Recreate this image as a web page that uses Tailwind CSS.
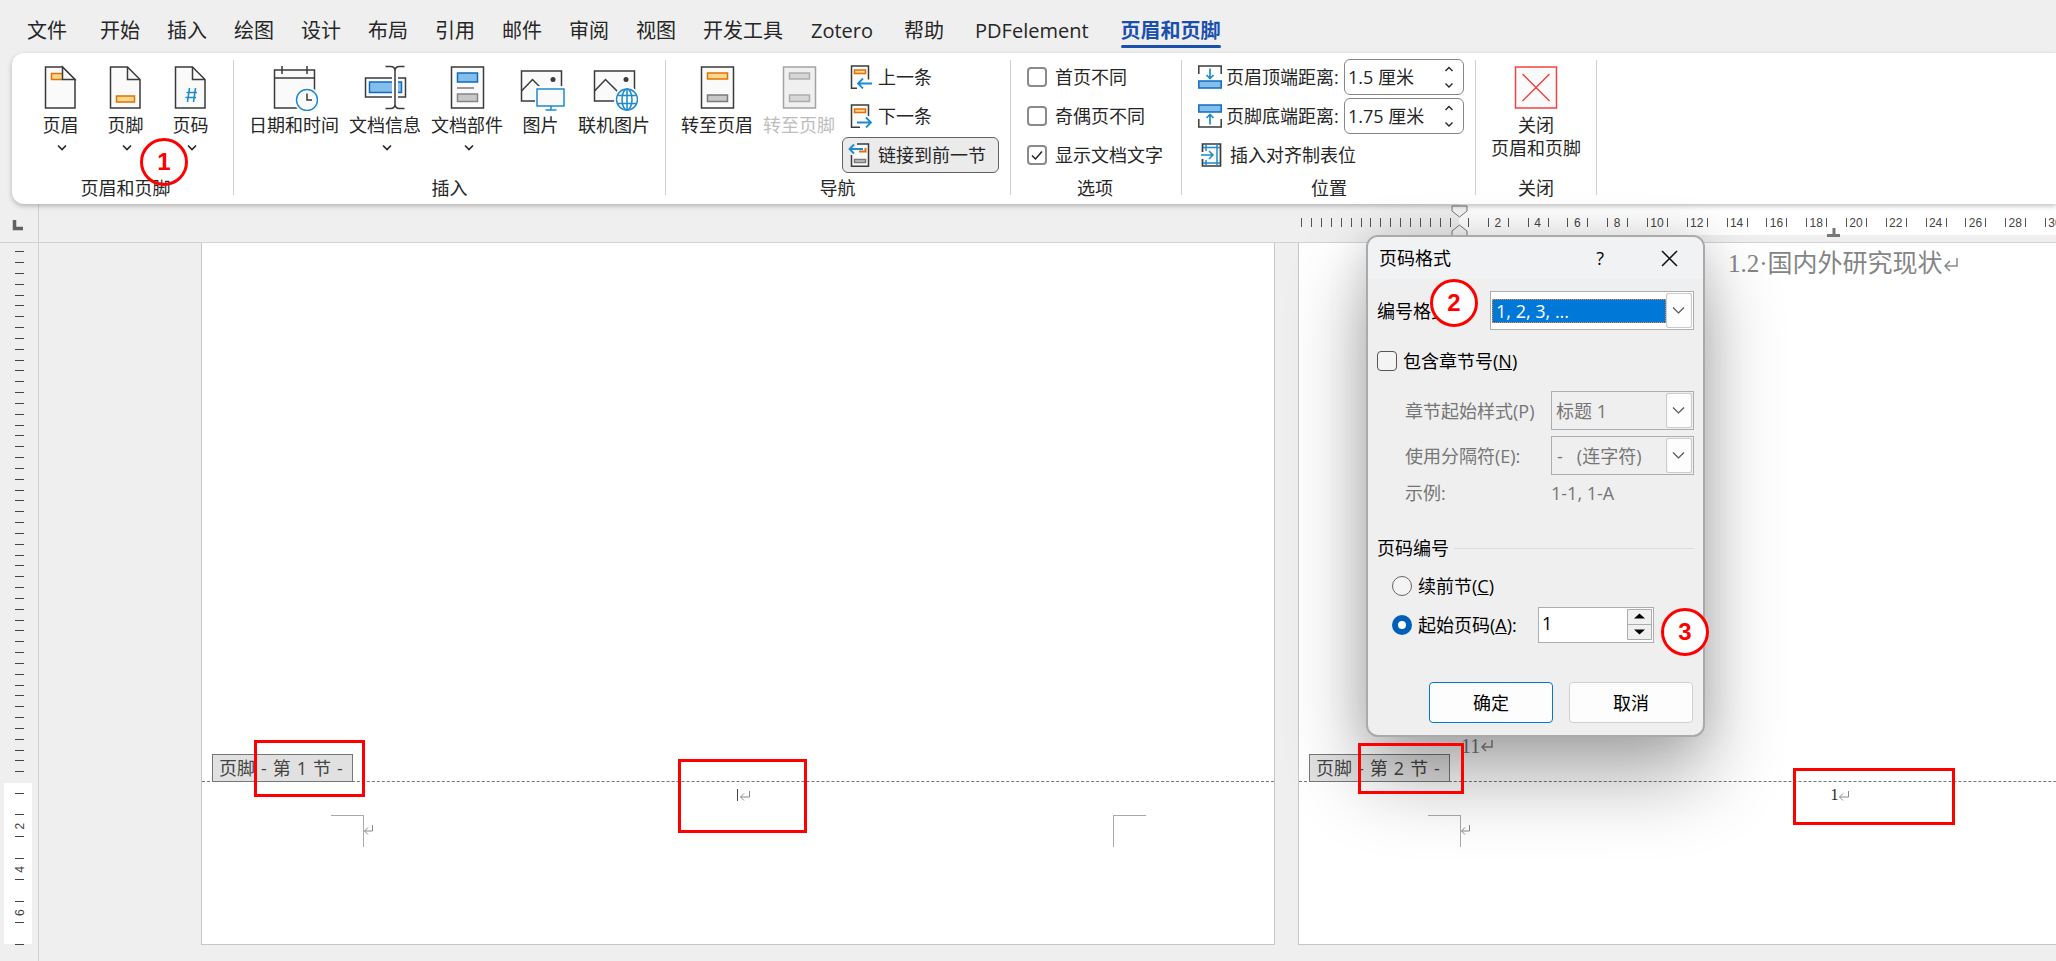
<!DOCTYPE html>
<html lang="zh-CN">
<head>
<meta charset="utf-8">
<title>页眉和页脚</title>
<script src="https://cdn.jsdelivr.net/npm/@tailwindcss/browser@4"></script>
</head>
<body class="h-screen overflow-hidden bg-[#efefef] font-['Open_Sans','Noto_Sans_CJK_SC',sans-serif] text-lg text-[#262626]">
<div class="relative flex h-full flex-col">

<!-- Tabs -->
<nav class="flex h-[53px] shrink-0 items-center gap-[27px] pt-[9px] pl-[27px] text-xl whitespace-nowrap">
  <button class="mr-[6px]">文件</button>
  <button>开始</button><button>插入</button><button>绘图</button><button>设计</button><button>布局</button><button>引用</button><button>邮件</button><button>审阅</button><button>视图</button><button>开发工具</button><button class="mr-1 ml-px">Zotero</button><button class="mr-1">帮助</button><button class="mr-[5px]">PDFelement</button>
  <button class="relative font-bold text-[#1a50ac]">页眉和页脚<span class="absolute inset-x-0 -bottom-[3px] h-[3px] rounded-full bg-[#1a50ac]"></span></button>
</nav>

<!-- Ribbon -->
<div class="relative z-10 ml-3 flex h-[151px] shrink-0 rounded-l-xl bg-white leading-6 whitespace-nowrap shadow-[0_2px_5px_rgba(0,0,0,0.25)]">
  <section class="flex flex-col justify-between pt-3 pr-[10px] pb-1 pl-4">
    <div class="flex">
      <button class="flex w-[65px] flex-col items-center">
        <svg width="48" height="46" fill="none" stroke="#3b3b3b" stroke-width="1.5"><path d="M8.500 2h17l12.500 12.500V43H8.500z" fill="#fafafa"/><path d="M25.500 8.500H14.500v6h11" fill="#f9d88b" stroke="#e07206"/><path d="M25.500 2v12.500h12.500z" fill="#fafafa"/></svg>
        <span class="mt-[2px]">页眉</span><svg width="10" height="20" class="ml-[3px]" fill="none" stroke="#262626" stroke-width="1.600"><path d="M1 8.500l4 4 4-4"/></svg>
      </button>
      <button class="flex w-[65px] flex-col items-center">
        <svg width="48" height="46" fill="none" stroke="#3b3b3b" stroke-width="1.500"><path d="M8.500 2h17l12.500 12.500V43H8.500z" fill="#fafafa"/><path d="M25.500 2v12.500h12.500"/><path d="M14.500 31h18v6h-18z" fill="#f9d88b" stroke="#e07206"/></svg>
        <span class="mt-[2px]">页脚</span><svg width="10" height="20" class="ml-[3px]" fill="none" stroke="#262626" stroke-width="1.600"><path d="M1 8.500l4 4 4-4"/></svg>
      </button>
      <button class="flex w-[65px] flex-col items-center">
        <svg width="48" height="46" fill="none" stroke="#3b3b3b" stroke-width="1.500"><path d="M8.500 2h17l12.500 12.500V43H8.500z" fill="#fafafa"/><path d="M25.500 2v12.500h12.500"/><path d="M22.500 23l-2 14M28.500 23l-2 14M19.500 27.500h10.500M18.500 32.500h10.500" stroke="#1e8bcd" stroke-width="1.600"/></svg>
        <span class="mt-[2px]">页码</span><svg width="10" height="20" class="ml-[3px]" fill="none" stroke="#262626" stroke-width="1.600"><path d="M1 8.500l4 4 4-4"/></svg>
      </button>
    </div>
    <h2 class="text-center">页眉和页脚</h2>
  </section>
  <div class="mt-[7px] mb-[9px] w-px bg-[#cfcfcf]"></div>

  <section class="flex flex-col justify-between px-[10px] pt-3 pb-1">
    <div class="flex items-start">
      <button class="flex flex-col items-center px-[5px]">
        <svg width="48" height="46" fill="none" stroke="#3b3b3b" stroke-width="1.500"><path d="M4.500 5h40v38h-40z" fill="#fafafa"/><path d="M4.500 13h40M12 1v8M37 1v8"/><circle cx="37" cy="35" r="13" fill="#fff" stroke="none"/><circle cx="37" cy="35" r="10.500" fill="#fafafa" stroke="#1e8bcd"/><path d="M37 28.500v6.500h5"/></svg>
        <span class="mt-[2px]">日期和时间</span>
      </button>
      <button class="flex flex-col items-center px-[5px]">
        <svg width="48" height="46" fill="none" stroke="#3b3b3b" stroke-width="1.500"><path d="M4.500 13h40v19h-40z" fill="#fafafa"/><path d="M8.500 17h32v10.500h-32z" fill="#83beec" stroke="#0f6cbd"/><path d="M34 3v40" stroke="#fff" stroke-width="6"/><path d="M24.500 1.500h5q4.500 0 4.500 4.500v33q0 4.500-4.500 4.500h-5M43.500 1.500h-5q-4.500 0-4.500 4.500v33q0 4.500 4.500 4.500h5"/></svg>
        <span class="mt-[2px]">文档信息</span><svg width="10" height="20" class="ml-[3px]" fill="none" stroke="#262626" stroke-width="1.600"><path d="M1 8.500l4 4 4-4"/></svg>
      </button>
      <button class="flex flex-col items-center px-[5px]">
        <svg width="48" height="46" fill="none" stroke="#3b3b3b" stroke-width="1.500"><path d="M8.500 2h32v41h-32z" fill="#fafafa"/><path d="M14.500 8h20v9h-20z" fill="#83beec" stroke="#0f6cbd"/><path d="M14 23h17" stroke="#777"/><path d="M14.500 29h20v7.500h-20z" fill="#c8c8c8" stroke="#858585"/></svg>
        <span class="mt-[2px]">文档部件</span><svg width="10" height="20" class="ml-[3px]" fill="none" stroke="#262626" stroke-width="1.600"><path d="M1 8.500l4 4 4-4"/></svg>
      </button>
      <button class="flex w-[65px] flex-col items-center">
        <svg width="48" height="46" fill="none" stroke="#3b3b3b" stroke-width="1.500"><path d="M4.500 6h40v30h-40z" fill="#fafafa"/><path d="M4.500 26L15.500 14.500 28 27"/><circle cx="36" cy="14.500" r="2.500" fill="#3b3b3b" stroke="none"/><path d="M18 21h30v25H18z" fill="#fff" stroke="none"/><path d="M20 24h27v17H20z" fill="#fafafa" stroke="#1e8bcd"/><path d="M34 41v4M28.500 45h11" stroke="#1e8bcd"/></svg>
        <span class="mt-[2px]">图片</span>
      </button>
      <button class="flex flex-col items-center px-[5px]">
        <svg width="48" height="46" fill="none" stroke="#3b3b3b" stroke-width="1.500"><path d="M4.500 6h40v30h-40z" fill="#fafafa"/><path d="M4.500 26L15.500 14.500 28 27"/><circle cx="36" cy="14.500" r="2.500" fill="#3b3b3b" stroke="none"/><circle cx="37" cy="34.500" r="13" fill="#fff" stroke="none"/><g stroke="#1e8bcd"><circle cx="37" cy="34.500" r="10.500" fill="#fafafa"/><ellipse cx="37" cy="34.500" rx="5" ry="10.500"/><path d="M37 24v21M28 30.500h18M28 38.500h18"/></g></svg>
        <span class="mt-[2px]">联机图片</span>
      </button>
    </div>
    <h2 class="text-center">插入</h2>
  </section>
  <div class="mt-[7px] mb-[9px] w-px bg-[#cfcfcf]"></div>

  <section class="flex flex-col justify-between pr-[11px] pb-1 pl-[10px]">
    <div class="flex items-start">
      <button class="flex flex-col items-center px-[5px] pt-3">
        <svg width="48" height="46" fill="none" stroke="#3b3b3b" stroke-width="1.500"><path d="M8.500 2h32v41h-32z" fill="#fafafa"/><path d="M14.500 8h20v6h-20z" fill="#f9d88b" stroke="#e07206"/><path d="M14.500 30h20v6.500h-20z" fill="#c8c8c8" stroke="#7a7a7a"/></svg>
        <span class="mt-[2px]">转至页眉</span>
      </button>
      <button class="flex flex-col items-center px-[5px] pt-3 text-[#bdbdbd]" disabled>
        <svg width="48" height="46" fill="none" stroke="#a3a3a3" stroke-width="1.500"><path d="M8.500 2h32v41h-32z" fill="#f0f0f0"/><path d="M14.500 8h20v6h-20zM14.500 30h20v6.500h-20z" fill="#d6d6d6" stroke="#adadad"/></svg>
        <span class="mt-[2px]">转至页脚</span>
      </button>
      <div class="ml-[2px] flex flex-col gap-[3px] pt-[6px]">
        <button class="flex h-9 items-center gap-1 pl-[6px]">
          <svg width="26" height="24" fill="none" stroke="#3b3b3b" stroke-width="1.500"><path d="M9 23.200H3.500V1h17v13.500" fill="#fafafa"/><path d="M6.500 5h11v3.500h-11z" fill="#f9d88b" stroke="#e07206"/><path d="M24 18.500H10M15 13.500l-5 5 5 5" stroke="#1e8bcd" stroke-width="1.800"/></svg>上一条</button>
        <button class="flex h-9 items-center gap-1 pl-[6px]">
          <svg width="26" height="24" fill="none" stroke="#3b3b3b" stroke-width="1.500"><path d="M12 23.200H3.500V1h17v11" fill="#fafafa"/><path d="M6.500 5h11v3.500h-11z" fill="#f9d88b" stroke="#e07206"/><path d="M9 18.500h14M18 13.500l5 5-5 5" stroke="#1e8bcd" stroke-width="1.800"/></svg>下一条</button>
        <button class="flex h-9 items-center gap-1 rounded-md border border-[#636363] bg-[#ebebeb] pr-3 pl-[5px]">
          <svg width="26" height="24" fill="none" stroke="#3b3b3b" stroke-width="1.500"><path d="M3.500 12v11.200h17V1H9" fill="#fafafa"/><path d="M11 8.500h6.500V5" stroke="#e07206" stroke-width="2"/><path d="M6.500 16.500h11v3h-11z" fill="#c8c8c8" stroke="#7a7a7a"/><path d="M15 6H1.500M6 1.500L1.500 6 6 10.500" stroke="#1e8bcd" stroke-width="1.800"/></svg>链接到前一节</button>
      </div>
    </div>
    <h2 class="text-center">导航</h2>
  </section>
  <div class="mt-[7px] mb-[9px] w-px bg-[#cfcfcf]"></div>

  <section class="flex flex-col justify-between pr-[18px] pb-1 pl-4">
    <div class="flex flex-col gap-[3px] pt-[6px]">
      <label class="flex h-9 items-center gap-2"><input type="checkbox" class="size-5 appearance-none rounded border-2 border-[#8a8a8a] bg-white">首页不同</label>
      <label class="flex h-9 items-center gap-2"><input type="checkbox" class="size-5 appearance-none rounded border-2 border-[#8a8a8a] bg-white">奇偶页不同</label>
      <label class="flex h-9 items-center gap-2"><span class="relative flex"><input type="checkbox" checked class="size-5 appearance-none rounded border-2 border-[#8a8a8a] bg-white"><svg width="20" height="20" class="pointer-events-none absolute inset-0" fill="none" stroke="#262626" stroke-width="1.500"><path d="M5 10.500l3.500 3.500L15 6.500"/></svg></span>显示文档文字</label>
    </div>
    <h2 class="text-center">选项</h2>
  </section>
  <div class="mt-[7px] mb-[9px] w-px bg-[#cfcfcf]"></div>

  <section class="flex flex-col justify-between pr-[11px] pb-1 pl-4">
    <div class="flex flex-col gap-[3px] pt-[6px]">
      <div class="flex h-9 items-center gap-1">
        <svg width="24" height="24" fill="none" stroke="#3b3b3b" stroke-width="1.500"><path d="M.8 9V1h22.400v8"/><path d="M.8 16h22.400v7H.8z" fill="#83beec" stroke="#0f6cbd"/><path d="M12 3.500v10M8.500 10l3.500 3.500L15.500 10" stroke="#1e8bcd" stroke-width="1.700"/></svg>
        <label for="top" class="w-[114px]">页眉顶端距离:</label>
        <span class="relative flex h-9 w-[120px]"><input id="top" type="text" value="1.5 厘米" class="w-full rounded-md border border-[#868686] bg-white pl-[3px]"><svg width="10" height="24" class="absolute top-[6px] right-[10px]" fill="none" stroke="#262626" stroke-width="1.400"><path d="M1.500 6L5 2.500 8.500 6M1.500 18.500L5 22l3.500-3.500"/></svg></span>
      </div>
      <div class="flex h-9 items-center gap-1">
        <svg width="24" height="24" fill="none" stroke="#3b3b3b" stroke-width="1.500"><path d="M.8 15v8h22.400v-8"/><path d="M.8 1h22.400v7H.8z" fill="#83beec" stroke="#0f6cbd"/><path d="M12 20.500v-10M8.500 14l3.500-3.500 3.500 3.500" stroke="#1e8bcd" stroke-width="1.700"/></svg>
        <label for="bottom" class="w-[114px]">页脚底端距离:</label>
        <span class="relative flex h-9 w-[120px]"><input id="bottom" type="text" value="1.75 厘米" class="w-full rounded-md border border-[#868686] bg-white pl-[3px]"><svg width="10" height="24" class="absolute top-[6px] right-[10px]" fill="none" stroke="#262626" stroke-width="1.400"><path d="M1.500 6L5 2.500 8.500 6M1.500 18.500L5 22l3.500-3.500"/></svg></span>
      </div>
      <button class="flex h-9 items-center gap-2 pl-[3px]">
        <svg width="21" height="24" fill="none" stroke="#1e8bcd" stroke-width="1.500"><path d="M1.500 9V1h18v22h-18v-7" fill="#fafafa" stroke="#3b3b3b" stroke-width="1.700"/><path d="M5 2v6M5 17v5M16 2v20M2 4.500h17M2 20h17M0 12h12M8 8l4 4-4 4"/></svg>插入对齐制表位</button>
    </div>
    <h2 class="pr-1 text-center">位置</h2>
  </section>
  <div class="mt-[7px] mb-[9px] w-px bg-[#cfcfcf]"></div>

  <section class="flex w-[120px] flex-col justify-between pt-3 pb-1">
    <button class="flex flex-col items-center">
      <svg width="48" height="46" fill="#fafafa" stroke="#ee4443" stroke-width="1.500"><path d="M3.500 2h41v41h-41zM10.500 9l27 27M37.500 9l-27 27"/></svg>
      <span class="mt-[2px]">关闭</span><span class="-mt-px">页眉和页脚</span>
    </button>
    <h2 class="text-center">关闭</h2>
  </section>
  <div class="mt-[7px] mb-[9px] w-px bg-[#cfcfcf]"></div>
</div>

<!-- Horizontal ruler -->
<div class="flex h-[39px] shrink-0 border-b border-[#d2d2d2]">
  <div class="w-[39px] shrink-0 border-r border-[#d2d2d2]"><svg width="38" height="38"><path d="M14.500 16v8.500H23" fill="none" stroke="#606060" stroke-width="3.500"/></svg></div>
  <svg id="hruler" class="h-[38px] min-w-0 flex-1 font-['Liberation_Sans',sans-serif] text-xs" fill="#444" text-anchor="middle"></svg>
</div>

<!-- Document -->
<main class="flex min-h-0 flex-1">
  <svg id="vruler" class="h-full w-[38px] shrink-0 font-['Liberation_Sans',sans-serif] text-xs" fill="#444" text-anchor="middle"></svg>
  <div class="flex min-w-0 flex-1 gap-[23px] overflow-hidden border-l border-[#d2d2d2] pb-4 pl-[162px]">

    <article class="flex w-[1074px] shrink-0 flex-col border-x border-b border-[#c6c6c6] bg-white">
      <div class="flex-1"></div>
      <div class="flex h-7 border-b border-dashed border-[#777] pl-[10px]">
        <div class="flex h-7 gap-[6px] border border-[#777] bg-[#e1e1e1] pr-[9px] pl-[6px] leading-[27px] text-[#444]"><span>页脚</span> <span>-</span> <span>第</span> <span>1</span> <span>节</span> <span>-</span></div>
      </div>
      <div class="flex h-[162px] flex-col">
        <p class="mb-[7px] flex h-[26px] items-center justify-center pl-[10px]"><span class="h-3 w-px bg-[#444]"></span><svg width="11" height="11" class="ml-px" fill="none" stroke="#8a8a8a"><path d="M10.500 1v6H1.500M5 3.500L1.500 7 5 10.500"/></svg></p>
        <div class="flex pr-[128px] pl-[129px]">
          <div class="h-8 w-[33px] border-t border-r border-[#aaa]"></div>
          <svg width="11" height="12" class="mt-[9px]" fill="none" stroke="#8a8a8a"><path d="M8.500 1v6H.5M4 3.500L.5 7 4 10.500"/></svg>
          <div class="ml-auto h-8 w-[33px] border-t border-l border-[#aaa]"></div>
        </div>
      </div>
    </article>

    <article class="flex w-[1074px] shrink-0 flex-col border-x border-b border-[#c6c6c6] bg-white">
      <h1 class="flex flex-1 items-start pt-[3px] pl-[429px] font-['Liberation_Serif','Noto_Sans_CJK_SC',serif] text-[25px] leading-9 text-[#858585]">1.2·国内外研究现状<svg width="16" height="16" class="mt-[10px]" fill="none" stroke="#8a8a8a" stroke-width="1.500"><path d="M14 2v8H2M7 5L2 10l5 5"/></svg></h1>
      <p class="flex h-4 items-center pl-[162px] font-['Liberation_Serif',serif] text-xl text-[#777]">11<svg width="14" height="14" fill="none" stroke="#8a8a8a" stroke-width="1.500"><path d="M12 1v7H2M6 4L2 8l4 4"/></svg></p>
      <div class="flex h-7 border-b border-dashed border-[#777] px-[10px]">
        <div class="flex h-7 gap-[6px] border border-[#777] bg-[#e1e1e1] pr-[9px] pl-[6px] leading-[27px] text-[#444]"><span>页脚</span> <span>-</span> <span>第</span> <span>2</span> <span>节</span> <span>-</span></div>
      </div>
      <div class="flex h-[162px] flex-col">
        <p class="mb-[7px] flex h-[26px] items-center justify-center pl-[10px] font-['Liberation_Serif',serif] text-base">1<svg width="11" height="11" fill="none" stroke="#8a8a8a"><path d="M9.500 1v6H.5M4 3.500L.5 7 4 10.500"/></svg></p>
        <div class="flex pl-[129px]">
          <div class="h-8 w-[33px] border-t border-r border-[#aaa]"></div>
          <svg width="11" height="12" class="mt-[9px]" fill="none" stroke="#8a8a8a"><path d="M8.500 1v6H.5M4 3.500L.5 7 4 10.500"/></svg>
        </div>
      </div>
    </article>
  </div>
</main>

<!-- Page number format dialog -->
<div role="dialog" aria-label="页码格式" class="absolute top-[235px] left-[1366px] z-20 w-[339px] rounded-xl border-2 border-[#aaa] bg-[#efefef] text-black shadow-[0_40px_80px_rgba(0,0,0,0.33),0_0_40px_rgba(0,0,0,0.12)]">
  <header class="flex h-[42px] items-center rounded-t-[10px] bg-[#f1f2f4] pl-[11px]">
    <h2 class="flex-1">页码格式</h2>
    <button class="mr-[57px]" aria-label="帮助">?</button>
    <button class="mr-[25px]" aria-label="关闭"><svg width="17" height="17" stroke="#111" stroke-width="1.500"><path d="M1 1l15 15M16 1L1 16"/></svg></button>
  </header>
  <form class="pr-[9px] pb-3 pl-[9px] leading-6">
    <div class="mt-3 flex h-[39px] items-center">
      <label for="fmt" class="w-[113px]">编号格式(F):</label>
      <span class="relative flex h-full flex-1 items-center border border-[#acaeb3] bg-white pl-px">
        <select id="fmt" class="h-6 w-[174px] appearance-none border border-dotted border-[#ff8728] bg-[#0078d7] pl-[3px] leading-none text-white"><option>1, 2, 3, ...</option></select>
        <svg width="26" height="35" class="pointer-events-none absolute right-px" fill="none" stroke="#555" stroke-width="1.200"><rect x=".5" y=".5" width="25" height="34" rx="2" fill="#fdfdfd" stroke="#ccc"/><path d="M7 14.500l5.500 5.500 5.500-5.500"/></svg>
      </span>
    </div>
    <label class="mt-[19px] flex h-6 items-center gap-[6px]"><input type="checkbox" class="size-5 appearance-none rounded border border-[#555] bg-[#f4f4f4]"><span>包含章节号(<u>N</u>)</span></label>
    <div class="mt-[18px] flex flex-col gap-[6px] pl-7 text-[#767676]">
      <div class="flex h-[39px] items-center">
        <label for="style" class="w-[146px]">章节起始样式(P)</label>
        <span class="relative flex h-full flex-1 items-center border border-[#acaeb3]">
          <select id="style" disabled class="w-[114px] appearance-none pl-1"><option>标题 1</option></select>
          <svg width="26" height="35" class="pointer-events-none absolute right-px" fill="none" stroke="#555" stroke-width="1.200"><rect x=".5" y=".5" width="25" height="34" rx="2" fill="#fdfdfd" stroke="#ccc"/><path d="M7 14.500l5.500 5.500 5.500-5.500"/></svg>
        </span>
      </div>
      <div class="flex h-[39px] items-center">
        <label for="sep" class="w-[146px]">使用分隔符(E):</label>
        <span class="relative flex h-full flex-1 items-center border border-[#acaeb3]">
          <select id="sep" disabled class="w-[114px] appearance-none pl-[5px]"><option>-&nbsp;&nbsp; (连字符)</option></select>
          <svg width="26" height="35" class="pointer-events-none absolute right-px" fill="none" stroke="#555" stroke-width="1.200"><rect x=".5" y=".5" width="25" height="34" rx="2" fill="#fdfdfd" stroke="#ccc"/><path d="M7 14.500l5.500 5.500 5.500-5.500"/></svg>
        </span>
      </div>
      <div class="flex h-6"><span class="w-[146px]">示例:</span><span>1-1, 1-A</span></div>
    </div>
    <fieldset class="mt-[31px]">
      <legend class="flex h-6 w-full items-center gap-[5px]">页码编号<span class="h-px flex-1 bg-[#dcdcdc]"></span></legend>
      <label class="mt-[14px] ml-[15px] flex h-6 items-center gap-[6px]"><input type="radio" name="num" class="size-5 appearance-none rounded-full border border-[#666] bg-[#f4f4f4]"><span>续前节(<u>C</u>)</span></label>
      <div class="mt-[9px] ml-[15px] flex h-9 items-center">
        <label class="flex w-[146px] items-center gap-[6px]"><input type="radio" name="num" checked class="size-5 appearance-none rounded-full border-[6px] border-[#005fb8] bg-white"><span>起始页码(<u>A</u>):</span></label>
        <span class="relative flex h-9 w-[116px]"><input aria-label="起始页码" type="text" value="1" class="w-full border border-[#acaeb3] bg-white pb-1 pl-[3px]"><svg width="25" height="31" class="absolute top-[2px] right-[2px]" fill="#f0f0f0" stroke="#acacac"><path d="M.5.5h24v15H.5zM.5 15.500h24v15H.5z"/><path d="M7 9.500h11l-5.500-5zM7 20.500h11l-5.500 5z" fill="#000" stroke="none"/></svg></span>
      </div>
    </fieldset>
    <div class="mt-[39px] flex justify-end gap-4 pr-px">
      <button type="button" class="h-[41px] w-[124px] rounded border border-[#0078d4] bg-[#fdfdfd]">确定</button>
      <button type="button" class="h-[41px] w-[124px] rounded border border-[#d0d0d0] bg-[#fdfdfd]">取消</button>
    </div>
  </form>
</div>

<!-- Callouts laid over the window -->
<div class="pointer-events-none absolute inset-0 z-30 font-['Liberation_Sans',sans-serif] text-2xl leading-none font-bold text-[#f00]">
  <span class="absolute top-[138px] left-[140px] flex size-12 items-center justify-center rounded-full border-[3px] border-[#f00]">1</span>
  <span class="absolute top-[279px] left-[1430px] flex size-12 items-center justify-center rounded-full border-[3px] border-[#f00] bg-white">2</span>
  <span class="absolute top-[608px] left-[1661px] flex size-12 items-center justify-center rounded-full border-[3px] border-[#f00] bg-white">3</span>
  <span class="absolute top-[740px] left-[254px] h-[57px] w-[111px] border-[3px] border-[#f00]"></span>
  <span class="absolute top-[759px] left-[678px] h-[74px] w-[129px] border-[3px] border-[#f00]"></span>
  <span class="absolute top-[743px] left-[1358px] h-[51px] w-[106px] border-[3px] border-[#f00]"></span>
  <span class="absolute top-[768px] left-[1793px] h-[57px] w-[162px] border-[3px] border-[#f00]"></span>
</div>
</div>

<script>
// Horizontal ruler: margin ticks, white text area, numbers every two characters.
const hx = 1420, unit = 19.9;
let h = `<rect x="${hx}" y="0" width="100%" height="31" fill="#fff"/>`;
const tick = x => `<rect x="${Math.round(x)}" y="14" width="1" height="9" fill="#555"/>`;
for (let i = 1; i <= 16; i++) h += tick(hx + 1 - i * 9.95);
for (let n = 0; n <= 30; n += 2) {
  const x = hx + n * unit;
  if (n) h += tick(x - unit / 2 - 1) + `<text x="${x - 1}" y="23">${n}</text>`;
  h += tick(x + unit / 2 - 1);
}
h += `<path d="M1413 2h15v5l-7.500 6-7.500-6zM1413 32h15v-5l-7.500-6-7.500 6z" fill="#f5f5f5" stroke="#777"/>`;
h += `<path d="M1795 24v6M1788 31.500h13" stroke="#777" stroke-width="3"/>`;
document.getElementById('hruler').innerHTML = h;

// Vertical ruler: margin ticks, then the footer's white area.
const vy = 540, vu = 21.6;
let v = `<rect x="4" y="${vy}" width="28" height="161" fill="#fff"/>`;
const vt = y => `<rect x="15" y="${Math.round(y)}" width="9" height="1" fill="#444"/>`;
for (let i = 1; i <= 49; i++) v += vt(vy - 1 - i * 10.83);
for (let n = 0; n <= 6; n += 2) {
  const y = vy - 1 + n * vu;
  if (n) v += vt(y - vu / 2) + `<text transform="translate(24 ${y + 1}) rotate(-90)">${n}</text>`;
  v += vt(y + vu / 2);
}
v += vt(701);
document.getElementById('vruler').innerHTML = v;
</script>
</body>
</html>
